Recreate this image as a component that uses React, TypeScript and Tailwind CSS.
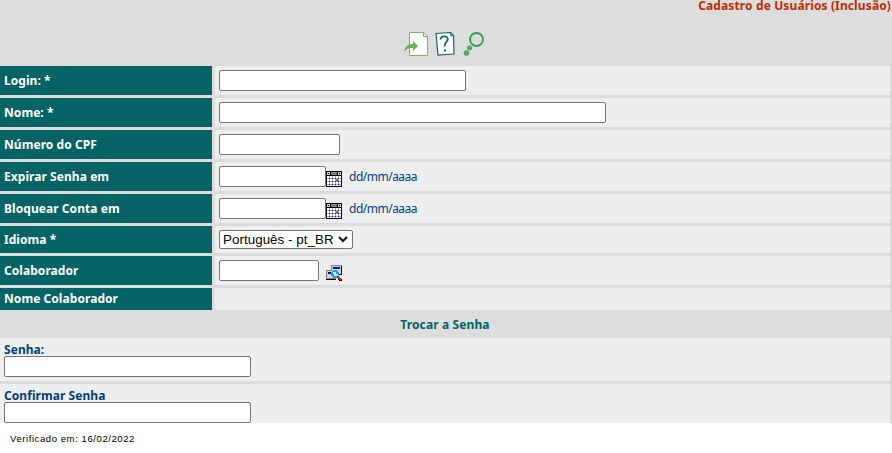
import type { ReactNode } from "react";

const field = "block h-[21px] shrink-0 rounded-[2px] border border-[#767676] bg-white px-1 text-[13px] outline-none";

function Calendar() {
  return (
    <svg width="16" height="16" viewBox="0 0 16 16" shapeRendering="crispEdges" className="mt-[5px] shrink-0">
      <path fill="#000" d="M0 0h16v16H0z" />
      <path fill="#c8c8c8" d="M1 1h3v3H1zM12 1h3v3h-3z" />
      <path fill="#808080" d="M5 1h6v3H5z" />
      <path fill="#000" d="M2 2h1v1H2zM13 2h1v1h-1z" />
      <path fill="#a9a9b5" d="M1 5h14v10H1z" />
      {[5, 8, 11, 14].map((y) =>
        [1, 4, 7, 10, 13].map((x) => <path key={`${x}-${y}`} fill="#fff" d={`M${x} ${y}h2v${y === 14 ? 1 : 2}h-2z`} />),
      )}
      {[7, 10, 13].map((y) =>
        [3, 6, 9, 12].map((x) => <path key={`${x}-${y}`} fill="#1515e0" d={`M${x} ${y}h1v1h-1z`} />),
      )}
      <path fill="#e00000" d="M10 8h2v2h-2z" />
      <path fill="#ffb000" d="M10 8h1v1h-1z" />
    </svg>
  );
}

function Lookup() {
  return (
    <svg width="16" height="16" viewBox="0 0 16 16" shapeRendering="crispEdges" className="mt-[5px] ml-[7px] shrink-0">
      <path fill="#808080" d="M5 0h11v10H5zM0 5h10v10H0z" />
      <path fill="#d5d5d5" d="M6 1h9v8H6zM1 6h8v7H1z" />
      <path fill="#0000bf" d="M7 2h7v2H7zM2 7h4v2H2z" />
      <path fill="#000" d="M15 1h1v9h-4v-1h3zM0 14h10v1H0z" />
      <circle cx="9" cy="9" r="4" fill="#18a8d8" />
      <path fill="#a8f4ff" d="M7 7h3v2h2v2H8V9H7z" />
      <path fill="#fff" d="M7 7h2v1H7zM10 10h1v1h-1z" />
      <path fill="#000" d="M12 11h1v1h1v1h1v1h1v2h-3v-1h-1v-2h-1v-1h1z" />
      <path fill="#f01808" d="M11 11h2v1h1v1h1v2h-2v-1h-1v-1h-1z" />
    </svg>
  );
}

function Row({ label, h, children }: { label: string; h: string; children?: ReactNode }) {
  return (
    <div className={`flex shrink-0 gap-[3px] ${h}`}>
      <div className="flex w-[212px] items-center bg-[#046365] pl-1 text-white">{label}</div>
      <div className="flex flex-1 items-start bg-[#eee] pt-1 pl-1">{children}</div>
    </div>
  );
}

function DateField() {
  return (
    <>
      <input className={`${field} w-[107px]`} />
      <Calendar />
      <span className="mt-[3px] ml-[7px] font-normal leading-4 tracking-[-0.5px] text-[#004080]">dd/mm/aaaa</span>
    </>
  );
}

export default function App() {
  return (
    <div className="h-[453px] w-[892px] overflow-hidden bg-white font-['Noto_Sans',sans-serif] text-[12px] font-bold leading-4 tracking-[0.06px]">
      <div className="h-[423px] bg-[#ddd]">
        <div className="flex h-[66px] flex-col">
          <div className="h-8 pr-px text-right leading-[11px] tracking-[0.12px] whitespace-nowrap text-[#bf2c00]">
            Cadastro de Usuários (Inclusão)
          </div>
          <div className="flex h-6 gap-[6px] pl-[404px]">
            <svg width="25" height="24" viewBox="0 0 25 24" fill="none">
              <path d="M5.5.5h14l4 4v19h-18z" fill="#fff" stroke="#7fb85a" />
              <path d="M19.5.5v4h4" stroke="#7fb85a" />
              <path d="M0 20C1 14 5 11.5 9 12V9l5 5-5 5v-3c-4-.5-7 1-9 4z" fill="#68b34b" />
            </svg>
            <svg width="20" height="24" viewBox="0 0 20 24" fill="none" stroke="#17676a">
              <path d="M1 1.5 15.5.5l3 3L19 22 3 23z" fill="#fff" strokeWidth="1.2" />
              <path d="m15.5.5.3 3.4 2.7-.4" />
              <path d="M5.5 7.5C5.3 3.5 13 3.2 12.8 7.2c-.1 3-3.6 3.2-3.2 7.3" strokeWidth="1.8" />
              <path d="M9 17.5h2v2H9z" fill="#17676a" stroke="none" />
            </svg>
            <svg width="24" height="24" viewBox="0 0 24 24" fill="none" stroke="#38a05c" className="ml-px">
              <circle cx="14.5" cy="7.4" r="6.5" strokeWidth="2" />
              <circle cx="7.6" cy="16" r="2.1" fill="#62b64d" />
              <circle cx="4.4" cy="21" r="2.3" fill="#62b64d" />
            </svg>
          </div>
        </div>
        <div className="flex flex-col gap-[3px] pr-[2px]">
          <Row label="Login: *" h="h-[29px]"><input className={`${field} w-[247px]`} /></Row>
          <Row label="Nome: *" h="h-[29px]"><input className={`${field} w-[387px]`} /></Row>
          <Row label="Número do CPF" h="h-[29px]"><input className={`${field} w-[121px]`} /></Row>
          <Row label="Expirar Senha em" h="h-[29px]"><DateField /></Row>
          <Row label="Bloquear Conta em" h="h-[29px]"><DateField /></Row>
          <Row label="Idioma *" h="h-[27px]">
            <div className="flex h-[19px] w-[134px] items-center rounded-[2px] border border-[#767676] bg-white pl-[3px] font-['Liberation_Sans',Arial,sans-serif] text-[13.333px] font-normal whitespace-nowrap text-black">
              Português - pt_BR
              <svg width="10" height="7" viewBox="0 0 10 7" className="ml-1 shrink-0" fill="none" stroke="#111" strokeWidth="2">
                <path d="m1 1 4 4 4-4" />
              </svg>
            </div>
          </Row>
          <Row label="Colaborador" h="h-[29px]">
            <input className={`${field} w-[100px]`} />
            <Lookup />
          </Row>
          <Row label="Nome Colaborador" h="h-[22px]" />
        </div>
        <div className="flex h-7 items-center justify-center pt-px pr-[2px] tracking-[0.12px] text-[#046365]">Trocar a Senha</div>
        <div className="flex flex-col gap-[3px] pr-[2px] text-[#004080]">
          <div className="h-[43px] bg-[#eee] pt-1 pl-1">
            <div className="h-[14px]">Senha:</div>
            <input className={`${field} w-[247px]`} />
          </div>
          <div className="h-[39px] bg-[#eee] pt-1 pl-1">
            <div className="h-[14px]">Confirmar Senha</div>
            <input className={`${field} w-[247px]`} />
          </div>
        </div>
      </div>
      <div className="pt-2 pl-[10px] font-['Liberation_Sans',Arial,sans-serif] text-[9.6px] font-normal tracking-[0.54px] text-black">
        Verificado em: 16/02/2022
      </div>
    </div>
  );
}
